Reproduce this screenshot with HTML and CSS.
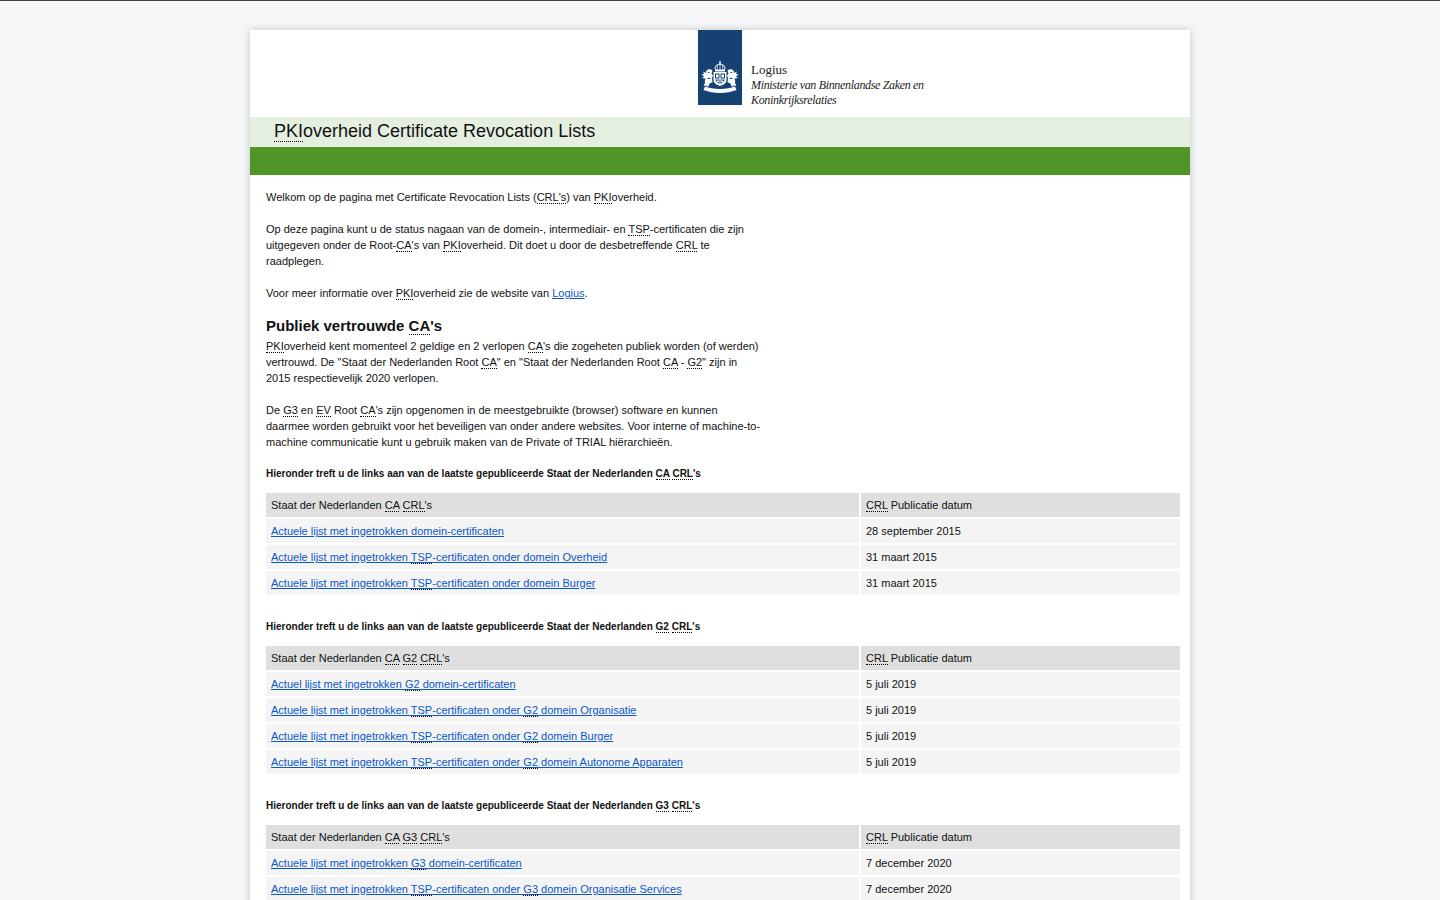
FILE: index.html
```html
<!DOCTYPE html>
<html lang="nl">
<head>
    <meta charset="UTF-8">
    <meta name="viewport" content="width=device-width, initial-scale=1.0">
    <title>PKIoverheid Certificate Revocation Lists</title>
    <link rel="stylesheet" href="styles.css">
</head>
<body>

    <div class="page">
        <div class="logo-row">
            <div class="logo">
                <div class="logo-box">
                    <svg class="crest" viewBox="0 0 38 32" width="38" height="32">
                        <!-- crown -->
                        <path fill="none" stroke="#fff" stroke-width="1" d="M14.5 9c-1-2-.5-4 1.5-5 1-.6 2-.8 3-.8s2 .2 3 .8c2 1 2.500 3 1.500 5z"/>
                        <path fill="#fff" d="M18.300 0h1.400v3h-1.400zM14 9h10v1.500H14z"/>
                        <path stroke="#fff" stroke-width=".7" d="M19 3v6M16.500 4l-.5 5M21.500 4l.5 5"/>
                        <!-- shield -->
                        <path fill="#fff" d="M12.500 11h13v8c0 3-3 5-6.500 6-3.500-1-6.500-3-6.500-6z"/>
                        <path fill="#154273" d="M14 12.500h4.500v5H14zM19.500 12.500H24v5h-4.500zM14.500 18.500h4v4c-2-.5-3.500-2-4-4zM19.500 18.500h4c-.5 2-2 3.500-4 4z"/>
                        <path fill="#fff" d="M15 13.500h2.500v3H15zM20.500 13.500H23v3h-2.500zM16 19.500h2v1.500h-2zM20 19.500h2v1.500h-2z"/>
                        <!-- lions -->
                        <path fill="#fff" d="M11.500 9.500c-1.500-1.500-4-1.800-5.500-.5-1 .8-1 2-.5 3L2 10.500l1 2.500-2.500.5L3 15.500l-2 1.500 3.500.5c-.5 1.500-1 3-.5 4.500L2.500 25l3-.5 1.500 1.500 2-4 2.500-.5-.5-4.500 1-2.500-1.500-1.500z"/>
                        <path fill="#fff" d="M26.500 9.500c1.500-1.500 4-1.800 5.500-.5 1 .8 1 2 .5 3l3.500-1.500-1 2.500 2.500.5-2.500 2 2 1.500-3.500.5c.5 1.500 1 3 .5 4.500l1.500 3-3-.5-1.500 1.500-2-4-2.500-.5.5-4.500-1-2.500 1.500-1.500z"/>
                        <path fill="#154273" d="M7 11h1.500v1H7zM29.500 11H31v1h-1.500zM6.500 17h3v1h-3zM28.500 17h3v1h-3z"/>
                        <!-- ribbon -->
                        <path fill="#fff" d="M4 25.500c4 1.500 9 2.500 15 2.500s11-1 15-2.500l1.500 3.500c-5 2-10.500 3-16.500 3s-11.500-1-16.500-3z"/>
                    </svg>
                </div>
                <div class="logo-text">
                    <span class="logo-name">Logius</span>
                    <span class="logo-ministry">Ministerie van Binnenlandse Zaken en</span>
                    <span class="logo-ministry">Koninkrijksrelaties</span>
                </div>
            </div>
        </div>

        <h1 class="title"><abbr>PKI</abbr>overheid Certificate Revocation Lists</h1>
        <div class="green-bar"></div>

        <div class="content">
            <div class="intro">
                <p>Welkom op de pagina met Certificate Revocation Lists (<abbr>CRL's</abbr>) van <abbr>PKI</abbr>overheid.</p>
                <p>Op deze pagina kunt u de status nagaan van de domein-, intermediair- en <abbr>TSP</abbr>-certificaten die zijn uitgegeven onder de Root-<abbr>CA</abbr>'s van <abbr>PKI</abbr>overheid. Dit doet u door de desbetreffende <abbr>CRL</abbr> te raadplegen.</p>
                <p>Voor meer informatie over <abbr>PKI</abbr>overheid zie de website van <a href="#">Logius</a>.</p>

                <h2>Publiek vertrouwde <abbr>CA</abbr>'s</h2>
                <p><abbr>PKI</abbr>overheid kent momenteel 2 geldige en 2 verlopen <abbr>CA</abbr>'s die zogeheten publiek worden (of werden) vertrouwd. De "Staat der Nederlanden Root <abbr>CA</abbr>" en "Staat der Nederlanden Root <abbr>CA</abbr> - <abbr>G2</abbr>" zijn in 2015 respectievelijk 2020 verlopen.</p>
                <p>De <abbr>G3</abbr> en <abbr>EV</abbr> Root <abbr>CA</abbr>'s zijn opgenomen in de meestgebruikte (browser) software en kunnen daarmee worden gebruikt voor het beveiligen van onder andere websites. Voor interne of machine-to-machine communicatie kunt u gebruik maken van de Private of TRIAL hiërarchieën.</p>
            </div>

            <h3>Hieronder treft u de links aan van de laatste gepubliceerde Staat der Nederlanden <abbr>CA</abbr> <abbr>CRL</abbr>'s</h3>
            <table class="crl-table">
                <tr><th>Staat der Nederlanden <abbr>CA</abbr> <abbr>CRL</abbr>'s</th><th><abbr>CRL</abbr> Publicatie datum</th></tr>
                <tr><td><a href="#">Actuele lijst met ingetrokken domein-certificaten</a></td><td>28 september 2015</td></tr>
                <tr><td><a href="#">Actuele lijst met ingetrokken <abbr>TSP</abbr>-certificaten onder domein Overheid</a></td><td>31 maart 2015</td></tr>
                <tr><td><a href="#">Actuele lijst met ingetrokken <abbr>TSP</abbr>-certificaten onder domein Burger</a></td><td>31 maart 2015</td></tr>
            </table>

            <h3>Hieronder treft u de links aan van de laatste gepubliceerde Staat der Nederlanden <abbr>G2</abbr> <abbr>CRL</abbr>'s</h3>
            <table class="crl-table">
                <tr><th>Staat der Nederlanden <abbr>CA</abbr> <abbr>G2</abbr> <abbr>CRL</abbr>'s</th><th><abbr>CRL</abbr> Publicatie datum</th></tr>
                <tr><td><a href="#">Actuel lijst met ingetrokken <abbr>G2</abbr> domein-certificaten</a></td><td>5 juli 2019</td></tr>
                <tr><td><a href="#">Actuele lijst met ingetrokken <abbr>TSP</abbr>-certificaten onder <abbr>G2</abbr> domein Organisatie</a></td><td>5 juli 2019</td></tr>
                <tr><td><a href="#">Actuele lijst met ingetrokken <abbr>TSP</abbr>-certificaten onder <abbr>G2</abbr> domein Burger</a></td><td>5 juli 2019</td></tr>
                <tr><td><a href="#">Actuele lijst met ingetrokken <abbr>TSP</abbr>-certificaten onder <abbr>G2</abbr> domein Autonome Apparaten</a></td><td>5 juli 2019</td></tr>
            </table>

            <h3>Hieronder treft u de links aan van de laatste gepubliceerde Staat der Nederlanden <abbr>G3</abbr> <abbr>CRL</abbr>'s</h3>
            <table class="crl-table">
                <tr><th>Staat der Nederlanden <abbr>CA</abbr> <abbr>G3</abbr> <abbr>CRL</abbr>'s</th><th><abbr>CRL</abbr> Publicatie datum</th></tr>
                <tr><td><a href="#">Actuele lijst met ingetrokken <abbr>G3</abbr> domein-certificaten</a></td><td>7 december 2020</td></tr>
                <tr><td><a href="#">Actuele lijst met ingetrokken <abbr>TSP</abbr>-certificaten onder <abbr>G3</abbr> domein Organisatie Services</a></td><td>7 december 2020</td></tr>
            </table>
        </div>
    </div>

</body>
</html>
```

FILE: styles.css
```css
body {
    margin: 0;
    padding-top: 30px;
    background-color: #f4f6f8;
    border-top: 1px solid #444;
    font-family: "Liberation Sans", Arial, sans-serif;
    font-size: 11px;
    line-height: 16px;
    color: #111;
}
.page {
    width: 940px;
    margin: -1px auto 0;
    background: #fff;
    box-shadow: 0 0 8px rgba(0, 0, 0, 0.2);
    padding-bottom: 30px;
}
.logo-row {
    height: 87px;
}
.logo {
    display: flex;
    margin-left: 448px;
}
.logo-box {
    width: 44px;
    height: 75px;
    background-color: #154273;
    display: flex;
    justify-content: center;
}
.crest {
    margin-top: 31px;
}
.logo-text {
    display: flex;
    flex-direction: column;
    justify-content: flex-end;
    margin-left: 9px;
    height: 78px;
    font-family: "Liberation Serif", serif;
    color: #222;
    line-height: 15px;
}
.logo-name {
    margin-bottom: 1px;
    font-size: 13px;
}
.logo-ministry {
    font-size: 12px;
    font-style: italic;
    letter-spacing: -0.33px;
}
.title {
    margin: 0;
    height: 30px;
    padding-left: 24px;
    background-color: #e5efe0;
    font-size: 18px;
    font-weight: normal;
    line-height: 28px;
}
.green-bar {
    height: 28px;
    background-color: #4f9626;
}
.content {
    padding: 14px 10px 0 16px;
}
.intro {
    width: 496px;
}
.intro p {
    margin: 0 0 16px;
}
.intro p:last-child {
    margin-bottom: 0;
}
h2 {
    margin: -1px 0 0;
    padding-bottom: 2px;
    font-size: 15px;
    line-height: 20px;
}
h3 {
    margin: 16px 0 9px;
    font-size: 10px;
    line-height: 16px;
}
abbr {
    border-bottom: 1px dotted #000;
}
a {
    color: #0b57c9;
}
.crl-table {
    width: 914px;
    table-layout: fixed;
    border-collapse: separate;
    border-spacing: 0 2px;
    margin: 0 0 22px;
}
.crl-table th, .crl-table td {
    height: 24px;
    padding: 0 5px;
    font-weight: normal;
    text-align: left;
    background-color: #f4f4f4;
}
.crl-table th {
    background-color: #dfdfdf;
}
.crl-table th:first-child, .crl-table td:first-child {
    width: 583px;
}
.crl-table th:last-child, .crl-table td:last-child {
    border-left: 2px solid #fff;
}
```
